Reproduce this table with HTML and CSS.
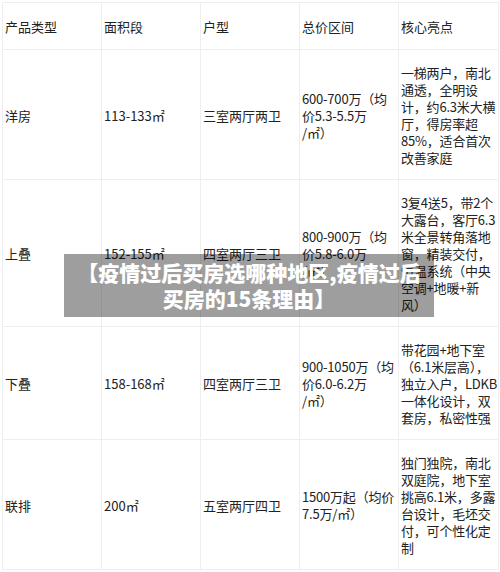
FILE: index.html
```html
<!DOCTYPE html>
<html lang="zh">
<head>
<meta charset="utf-8">
<link rel="stylesheet" href="styles.css">
</head>
<body>
<div class="page">
  <table class="grid">
    <colgroup>
      <col class="c1"><col class="c2"><col class="c3"><col class="c4"><col class="c5">
    </colgroup>
    <tr class="head">
      <td>产品类型</td><td>面积段</td><td>户型</td><td>总价区间</td><td>核心亮点</td>
    </tr>
    <tr>
      <td>洋房</td><td>113-133㎡</td><td>三室两厅两卫</td>
      <td class="lines">600-700万（均<br>价5.3-5.5万<br>/㎡）</td>
      <td class="lines">一梯两户，南北<br>通透，全明设<br>计，约6.3米大横<br>厅，得房率超<br>85%，适合首次<br>改善家庭</td>
    </tr>
    <tr>
      <td>上叠</td><td>152-155㎡</td><td>四室两厅三卫</td>
      <td class="lines">800-900万（均<br>价5.8-6.0万<br>/㎡）</td>
      <td class="lines">3复4送5，带2个<br>大露台，客厅6.3<br>米全景转角落地<br>窗，精装交付，<br>恒温系统（中央<br>空调+地暖+新<br>风）</td>
    </tr>
    <tr>
      <td>下叠</td><td>158-168㎡</td><td>四室两厅三卫</td>
      <td class="lines">900-1050万（均<br>价6.0-6.2万<br>/㎡）</td>
      <td class="lines">带花园+地下室<br>（6.1米层高），<br>独立入户，LDKB<br>一体化设计，双<br>套房，私密性强</td>
    </tr>
    <tr>
      <td>联排</td><td>200㎡</td><td>五室两厅四卫</td>
      <td class="lines">1500万起（均价<br>7.5万/㎡）</td>
      <td class="lines">独门独院，南北<br>双庭院，地下室<br>挑高6.1米，多露<br>台设计，毛坯交<br>付，可个性化定<br>制</td>
    </tr>
  </table>
  <div class="banner">【疫情过后买房选哪种地区,疫情过后<br>买房的15条理由】</div>
</div>
</body>
</html>
```
FILE: styles.css
```css
html, body {
  margin: 0;
  padding: 0;
  background: #fff;
}
.page {
  position: relative;
  width: 500px;
  height: 572px;
  padding: 2px 0 0 2px;
  box-sizing: border-box;
  overflow: hidden;
}
.grid {
  border-collapse: collapse;
  table-layout: fixed;
  width: 496px;
  font-family: "Noto Sans CJK SC", "Microsoft YaHei", sans-serif;
  font-size: 13px;
  line-height: 17px;
  color: #222;
}
.c1, .c2, .c3, .c4 { width: 99px; }
.c5 { width: 100px; }
.grid td {
  border: 1px solid #eeeeee;
  padding: 14px 0 13px 2px;
  vertical-align: middle;
}
.grid td.lines {
  white-space: nowrap;
  letter-spacing: -0.2px;
}
.grid .head td {
  padding-top: 15px;
  padding-bottom: 14px;
}
.banner {
  position: absolute;
  left: 64px;
  top: 254px;
  width: 370px;
  height: 63px;
  box-sizing: border-box;
  padding-top: 5px;
  background: rgba(0, 0, 0, 0.38);
  color: #fff;
  font-family: "Noto Sans CJK SC", sans-serif;
  font-weight: 900;
  font-size: 21px;
  line-height: 26px;
  text-align: center;
  white-space: nowrap;
}
```
